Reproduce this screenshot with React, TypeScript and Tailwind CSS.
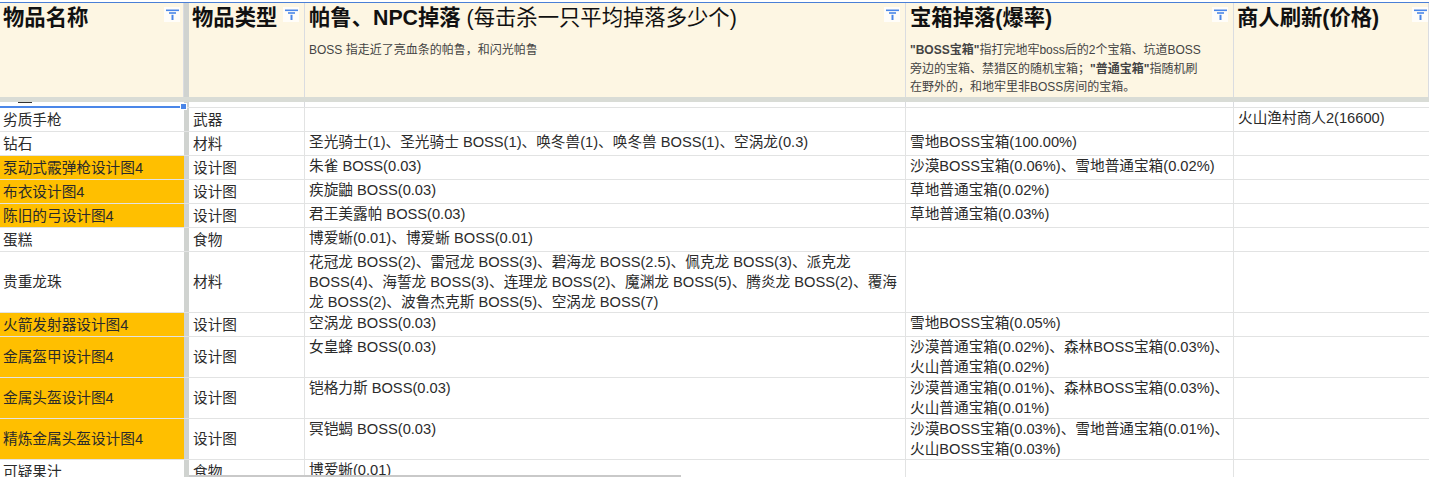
const font = { fontFamily: '"Liberation Sans", "Noto Sans CJK SC", sans-serif' }

const cols = 'grid grid-cols-[184px_5px_116px_601px_328px_1fr]'

type Row = {
	name: string
	type: string
	drop?: string[]
	chest?: string[]
	shop?: string
	h: string
	hot?: boolean
}

const rows: Row[] = [
	{ name: '劣质手枪', type: '武器', shop: '火山渔村商人2(16600)', h: 'h-[24px]' },
	{ name: '钻石', type: '材料', drop: ['圣光骑士(1)、圣光骑士 BOSS(1)、唤冬兽(1)、唤冬兽 BOSS(1)、空涡龙(0.3)'], chest: ['雪地BOSS宝箱(100.00%)'], h: 'h-[24px]' },
	{ name: '泵动式霰弹枪设计图4', type: '设计图', drop: ['朱雀 BOSS(0.03)'], chest: ['沙漠BOSS宝箱(0.06%)、雪地普通宝箱(0.02%)'], h: 'h-[24px]', hot: true },
	{ name: '布衣设计图4', type: '设计图', drop: ['疾旋鼬 BOSS(0.03)'], chest: ['草地普通宝箱(0.02%)'], h: 'h-[24px]', hot: true },
	{ name: '陈旧的弓设计图4', type: '设计图', drop: ['君王美露帕 BOSS(0.03)'], chest: ['草地普通宝箱(0.03%)'], h: 'h-[24px]', hot: true },
	{ name: '蛋糕', type: '食物', drop: ['博爱蜥(0.01)、博爱蜥 BOSS(0.01)'], h: 'h-[24px]' },
	{
		name: '贵重龙珠',
		type: '材料',
		drop: [
			'花冠龙 BOSS(2)、雷冠龙 BOSS(3)、碧海龙 BOSS(2.5)、佩克龙 BOSS(3)、派克龙',
			'BOSS(4)、海誓龙 BOSS(3)、连理龙 BOSS(2)、魔渊龙 BOSS(5)、腾炎龙 BOSS(2)、覆海',
			'龙 BOSS(2)、波鲁杰克斯 BOSS(5)、空涡龙 BOSS(7)',
		],
		h: 'h-[61px]',
	},
	{ name: '火箭发射器设计图4', type: '设计图', drop: ['空涡龙 BOSS(0.03)'], chest: ['雪地BOSS宝箱(0.05%)'], h: 'h-[24px]', hot: true },
	{ name: '金属盔甲设计图4', type: '设计图', drop: ['女皇蜂 BOSS(0.03)'], chest: ['沙漠普通宝箱(0.02%)、森林BOSS宝箱(0.03%)、', '火山普通宝箱(0.02%)'], h: 'h-[41px]', hot: true },
	{ name: '金属头盔设计图4', type: '设计图', drop: ['铠格力斯 BOSS(0.03)'], chest: ['沙漠普通宝箱(0.01%)、森林BOSS宝箱(0.03%)、', '火山普通宝箱(0.01%)'], h: 'h-[41px]', hot: true },
	{ name: '精炼金属头盔设计图4', type: '设计图', drop: ['冥铠蝎 BOSS(0.03)'], chest: ['沙漠BOSS宝箱(0.03%)、雪地普通宝箱(0.01%)、', '火山BOSS宝箱(0.03%)'], h: 'h-[41px]', hot: true },
	{ name: '可疑果汁', type: '食物', drop: ['博爱蜥(0.01)'], h: 'h-[24px]' },
]

function FilterIcon({ className }: { className?: string }) {
	return (
		<span className={`absolute top-[4px] flex h-[15px] w-[16px] items-center justify-center bg-white/80 ${className ?? 'right-[5px]'}`}>
			<svg width="13" height="12" viewBox="0 0 13 12" aria-hidden="true">
				<path d="M0 0.5H13V2.1H0Z" fill="#4a86e8" />
				<path d="M3 3.2H10V4.8H3Z" fill="#4a86e8" />
				<path d="M5.5 5.8H7.5V11H5.5Z" fill="#4a86e8" />
			</svg>
		</span>
	)
}

function HeadCell({ title, className }: { title: string; className?: string }) {
	return (
		<div className="relative h-full border-r border-[#dadce0] bg-[#fdf6e3] pl-[3px]">
			<div className="text-[21.33px] leading-[30px] font-bold whitespace-nowrap text-[#111]">{title}</div>
			<FilterIcon className={className} />
		</div>
	)
}

function Lines({ items, className }: { items?: string[]; className?: string }) {
	return (
		<div className={className}>
			{items?.map((line) => (
				<div key={line} className="whitespace-nowrap">{line}</div>
			))}
		</div>
	)
}

export default function App() {
	return (
		<div style={font} className="relative h-[477px] w-[1429px] overflow-hidden bg-white text-[14.67px] text-[#2b2b2b]">
			<div className="mt-[2px] border-t border-[#4a7fd6]" />
			<div className={`${cols} h-[94px]`}>
				<HeadCell title="物品名称" className="right-[3px]" />
				<div className="bg-[#d0d3d0]" />
				<HeadCell title="物品类型" />
				<div className="relative h-full border-r border-[#dadce0] bg-[#fdf6e3] pl-[4px]">
					<div className="text-[21.33px] leading-[30px] font-bold whitespace-nowrap text-[#111]">
						帕鲁、NPC掉落 <span className="font-normal">(每击杀一只平均掉落多少个)</span>
					</div>
					<div className="mt-[8px] text-[12px] leading-[18px] text-[#444]">BOSS 指走近了亮血条的帕鲁，和闪光帕鲁</div>
					<FilterIcon />
				</div>
				<div className="relative h-full border-r border-[#dadce0] bg-[#fdf6e3] pl-[4px]">
					<div className="text-[21.33px] leading-[30px] font-bold whitespace-nowrap text-[#111]">宝箱掉落(爆率)</div>
					<div className="mt-[8px] text-[12px] leading-[18.5px] whitespace-nowrap text-[#444]">
						<div><b>"BOSS宝箱"</b>指打完地牢boss后的2个宝箱、坑道BOSS</div>
						<div>旁边的宝箱、禁猎区的随机宝箱；<b>"普通宝箱"</b>指随机刷</div>
						<div>在野外的，和地牢里非BOSS房间的宝箱。</div>
					</div>
					<FilterIcon />
				</div>
				<HeadCell title="商人刷新(价格)" className="right-[0px]" />
			</div>
			<div className="h-[5px] bg-[#d9dcd6]" />
			<div className={`${cols} h-[5px]`}>
				<div />
				<div className="bg-[#d0d3d0]" />
				<div className="border-r border-[#dadce0]" />
				<div className="border-r border-[#dadce0]" />
				<div className="border-r border-[#dadce0]" />
				<div />
			</div>
			{/* clipped stroke of the hidden row above the selection */}
			<div className="absolute top-[102px] left-[18px] h-px w-[14px] bg-[#333]" />
			{/* selection edge on the frozen column */}
			<div className="absolute top-[106px] left-0 h-[2px] w-[180px] bg-[#4a86e8]" />
			<div className="absolute top-[103px] left-[180px] h-[7px] w-[7px] border border-white bg-[#4a86e8]" />
			<div className="border-t border-[#e2e3e3]">
				{rows.map((row) => (
					<div key={row.name} className={`${cols} ${row.h} border-b border-[#e2e3e3]`}>
						<div className={`flex items-center pl-[3px] whitespace-nowrap ${row.hot ? 'bg-[#ffbf00]' : ''}`}>{row.name}</div>
						<div className="bg-[#d0d3d0]" />
						<div className="flex items-center border-r border-[#e2e3e3] pl-[4px]">{row.type}</div>
						<Lines items={row.drop} className="border-r border-[#e2e3e3] pl-[4px] leading-[20px]" />
						<Lines items={row.chest} className="border-r border-[#e2e3e3] pl-[4px] leading-[20px]" />
						<div className="pl-[4px] leading-[20px] whitespace-nowrap">{row.shop}</div>
					</div>
				))}
			</div>
			{/* horizontal scrollbar thumb */}
			<div className="absolute bottom-0 left-[189px] h-[2px] w-[492px] bg-[#c9c9c9]" />
		</div>
	)
}
